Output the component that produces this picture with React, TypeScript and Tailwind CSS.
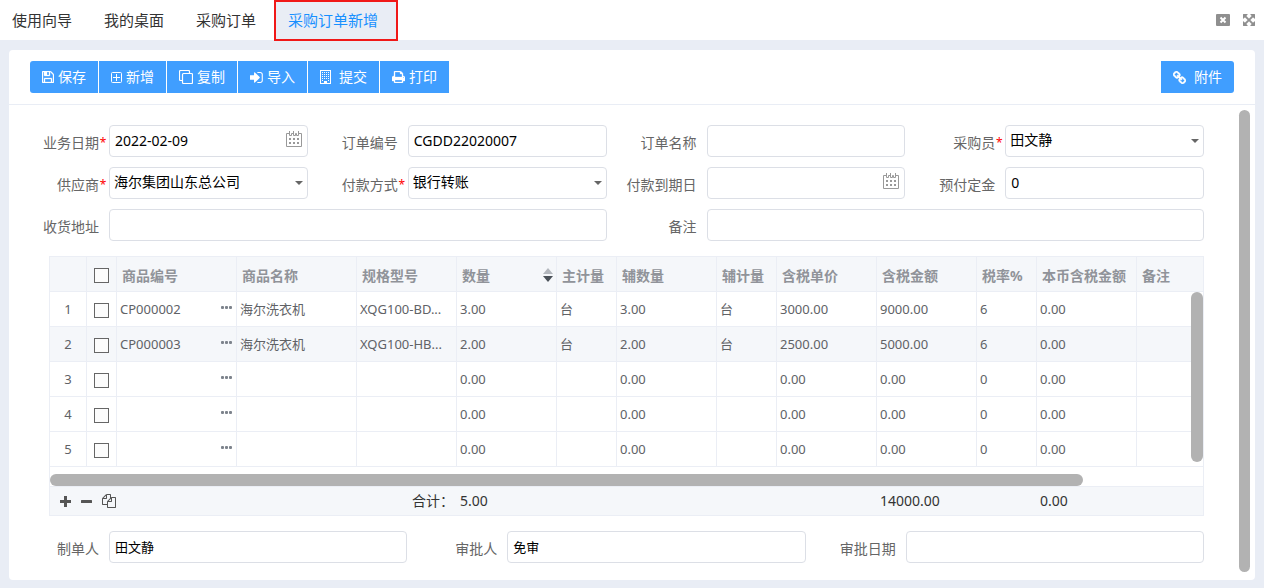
import type { ReactNode } from "react";

const tabs = ["使用向导", "我的桌面", "采购订单"];

const columns = [
  { key: "code", title: "商品编号" },
  { key: "name", title: "商品名称" },
  { key: "spec", title: "规格型号" },
  { key: "qty", title: "数量" },
  { key: "unit", title: "主计量" },
  { key: "auxQty", title: "辅数量" },
  { key: "auxUnit", title: "辅计量" },
  { key: "price", title: "含税单价" },
  { key: "amount", title: "含税金额" },
  { key: "rate", title: "税率%" },
  { key: "localAmount", title: "本币含税金额" },
  { key: "remark", title: "备注" },
] as const;

type Row = Partial<Record<(typeof columns)[number]["key"], string>>;

const blank: Row = { qty: "0.00", auxQty: "0.00", price: "0.00", amount: "0.00", rate: "0", localAmount: "0.00" };

const rows: Row[] = [
  {
    code: "CP000002", name: "海尔洗衣机", spec: "XQG100-BD...", qty: "3.00", unit: "台", auxQty: "3.00",
    auxUnit: "台", price: "3000.00", amount: "9000.00", rate: "6", localAmount: "0.00",
  },
  {
    code: "CP000003", name: "海尔洗衣机", spec: "XQG100-HB...", qty: "2.00", unit: "台", auxQty: "2.00",
    auxUnit: "台", price: "2500.00", amount: "5000.00", rate: "6", localAmount: "0.00",
  },
  blank,
  blank,
  blank,
];

/* ---------- icons ---------- */

function SaveIcon() {
  return (
    <svg viewBox="128 128 1536 1536" className="h-3 w-3 fill-current stroke-current stroke-[40]">
      <path d="M512 1536h768v-384h-768v384zm896 0h128v-896q0-14-10-38.5t-20-34.5l-281-281q-10-10-34-20t-39-10v416q0 40-28 68t-68 28h-576q-40 0-68-28t-28-68v-416h-128v1280h128v-416q0-40 28-68t68-28h832q40 0 68 28t28 68v416zm-384-928v-320q0-13-9.5-22.5t-22.5-9.5h-192q-13 0-22.5 9.5t-9.5 22.5v320q0 13 9.5 22.5t22.5 9.5h192q13 0 22.5-9.5t9.5-22.5zm640 32v928q0 40-28 68t-68 28h-1344q-40 0-68-28t-28-68v-1344q0-40 28-68t68-28h928q40 0 88 20t76 48l280 280q28 28 48 76t20 88z" />
    </svg>
  );
}

function AddIcon() {
  return (
    <svg viewBox="0 0 11 11" className="h-[11px] w-[11px] fill-none stroke-current">
      <rect x="0.5" y="0.5" width="10" height="10" rx="1" />
      <path d="M5.5 2v7M2 5.5h7" />
    </svg>
  );
}

function CopyIcon() {
  return (
    <svg viewBox="0 0 14 14" className="h-3.5 w-3.5 fill-none stroke-current stroke-[1.2]">
      <path d="M3.5 10.5h-2a1 1 0 0 1-1-1v-8a1 1 0 0 1 1-1h8a1 1 0 0 1 1 1v1.500" />
      <rect x="3.5" y="3.5" width="10" height="10" rx="1" />
    </svg>
  );
}

function ImportIcon() {
  return (
    <svg viewBox="192 256 1472 1280" className="h-[11px] w-[13px] fill-current">
      <path d="M1312 896q0 26-19 45l-544 544q-19 19-45 19t-45-19-19-45v-288h-448q-26 0-45-19t-19-45v-384q0-26 19-45t45-19h448v-288q0-26 19-45t45-19 45 19l544 544q19 19 19 45zm352-352v704q0 119-84.5 203.5t-203.5 84.5h-320q-13 0-22.5-9.5t-9.5-22.5q0-4-1-20t-.5-26.5 3-23.5 10-19.5 20.5-6.5h320q66 0 113-47t47-113v-704q0-66-47-113t-113-47h-312l-11.5-1-11.5-3-8-5.5-7-9-2-13.5q0-4-1-20t-.5-26.5 3-23.5 10-19.5 20.5-6.5h320q119 0 203.5 84.5t84.5 203.5z" />
    </svg>
  );
}

function SubmitIcon() {
  return (
    <svg viewBox="0 0 15 14" className="h-3.5 w-[15px] fill-current">
      <path fillRule="evenodd" d="M0 0h11v14H0zM1 1v12h3v-2h3v2h3V1z" />
      {[2, 4, 6, 8].map((y) => (
        <path key={y} d={`M2 ${y}h1v1h-1zM4 ${y}h1v1h-1zM6 ${y}h1v1h-1zM8 ${y}h1v1h-1z`} />
      ))}
      <path d="M2 10h1v1h-1zM8 10h1v1h-1z" />
    </svg>
  );
}

function PrintIcon() {
  return (
    <svg viewBox="64 128 1664 1536" className="h-3 w-[13px] fill-current stroke-current stroke-[40]">
      <path d="M448 1536h896v-256h-896v256zm0-640h896v-384h-160q-40 0-68-28t-28-68v-160h-640v640zm1152 64q0-26-19-45t-45-19-45 19-19 45 19 45 45 19 45-19 19-45zm128 0v416q0 13-9.5 22.5t-22.5 9.5h-224v160q0 40-28 68t-68 28h-960q-40 0-68-28t-28-68v-160h-224q-13 0-22.5-9.5t-9.5-22.5v-416q0-79 56.5-135.5t135.5-56.5h64v-544q0-40 28-68t68-28h672q40 0 88 20t76 48l152 152q28 28 48 76t20 88v256h64q79 0 135.5 56.5t56.5 135.5z" />
    </svg>
  );
}

function LinkIcon() {
  return (
    <svg viewBox="80 16 1632 1632" className="h-[13px] w-[13px] fill-current stroke-current stroke-[60]">
      <path d="M1520 1216q0-40-28-68l-208-208q-28-28-68-28-42 0-72 32 3 3 19 18.5t21.5 21.5 15 19 13 25.5 3.5 27.5q0 40-28 68t-68 28q-15 0-27.5-3.5t-25.5-13-19-15-21.5-21.5-18.5-19q-33 31-33 73 0 40 28 68l206 207q27 27 68 27 40 0 68-26l147-146q28-28 28-67zm-703-705q0-40-28-68l-206-207q-28-28-68-28-39 0-68 27l-147 146q-28 28-28 67 0 40 28 68l208 208q27 27 68 27 42 0 72-31-3-3-19-18.5t-21.5-21.5-15-19-13-25.5-3.5-27.5q0-40 28-68t68-28q15 0 27.5 3.5t25.5 13 19 15 21.5 21.5 18.5 19q33-31 33-73zm895 705q0 120-85 203l-147 146q-83 83-203 83-121 0-204-85l-206-207q-83-83-83-203 0-123 88-209l-88-88q-86 88-208 88-120 0-204-84l-208-208q-84-84-84-204t85-203l147-146q83-83 203-83 121 0 204 85l206 207q83 83 83 203 0 123-88 209l88 88q86-88 208-88 120 0 204 84l208 208q84 84 84 204z" />
    </svg>
  );
}

function CloseIcon() {
  return (
    <svg viewBox="0 0 14 12" className="h-3 w-3.5">
      <rect width="14" height="12" rx="1" className="fill-[#8f8f8f]" />
      <path d="M4.5 3.5l5 5M9.500 3.500L4.500 8.500" className="stroke-white stroke-2" />
    </svg>
  );
}

function ExpandIcon() {
  return (
    <svg viewBox="128 128 1536 1536" className="h-3 w-3 fill-[#8f8f8f] stroke-[#8f8f8f] stroke-[30]">
      <path d="M1411 541l-355 355 355 355 144-144q29-31 70-14 39 17 39 59v448q0 26-19 45t-45 19h-448q-42 0-59-40-17-39 14-69l144-144-355-355-355 355 144 144q31 30 14 69-17 40-59 40h-448q-26 0-45-19t-19-45v-448q0-42 40-59 39-17 69 14l144 144 355-355-355-355-144 144q-19 19-45 19-12 0-24-5-40-17-40-59v-448q0-26 19-45t45-19h448q42 0 59 40 17 39-14 69l-144 144 355 355 355-355-144-144q-31-30-14-69 17-40 59-40h448q26 0 45 19t19 45v448q0 42-39 59-13 5-25 5-26 0-45-19z" />
    </svg>
  );
}

function FilesIcon() {
  return (
    <svg viewBox="0 0 1792 1792" className="h-3.5 w-3.5 fill-[#555]">
      <path d="M1696 384q40 0 68 28t28 68v1216q0 40-28 68t-68 28h-960q-40 0-68-28t-28-68v-288h-544q-40 0-68-28t-28-68v-672q0-40 20-88t48-76l408-408q28-28 76-48t88-20h416q40 0 68 28t28 68v328q68-40 128-40h416zm-544 213l-299 299h299v-299zm-640-384l-299 299h299v-299zm196 647l316-316v-416h-384v416q0 40-28 68t-68 28h-416v640h512v-256q0-40 20-88t48-76zm956 804v-1152h-384v416q0 40-28 68t-68 28h-416v640h896z" />
    </svg>
  );
}

function CalendarIcon() {
  return (
    <svg viewBox="0 0 16 16" className="h-4 w-4">
      <path
        d="M3.5 2.5h-3v13h15v-13h-3M3.5 0v4.500h2v-2h2v-2.500M7.500 2v2.500h2v-2M9.500 2.500h1v2h2V0"
        className="fill-none stroke-[#999]"
      />
      <path d="M3 7h2v2H3zM7 7h2v2H7zM11 7h2v2h-2zM3 11h2v2H3zM7 11h2v2H7zM11 11h2v2h-2z" className="fill-[#999]" />
    </svg>
  );
}

/* ---------- form controls ---------- */

const controlClass = "h-8 w-full appearance-none rounded border border-[#dcdfe6] bg-white pb-0.5 text-black outline-none";

type FieldProps = {
  id: string;
  label: string;
  required?: boolean;
  wide?: boolean;
  children: ReactNode;
};

function Field({ id, label, required, wide, children }: FieldProps) {
  return (
    <div className={wide ? "col-span-2 flex" : "flex"}>
      <label htmlFor={id} className="flex w-[100px] shrink-0 justify-end pt-1 text-sm leading-7 text-[#666]">
        {label}
        <span className="w-2.5 pr-0.5 text-center text-xs leading-7 text-[#f00]">{required && "*"}</span>
      </label>
      <div className="relative min-w-0 flex-1">{children}</div>
    </div>
  );
}

function TextInput({ id, value = "", small }: { id: string; value?: string; small?: boolean }) {
  return (
    <input
      id={id}
      type="text"
      defaultValue={value}
      className={`${controlClass} pl-[5px] ${small ? "text-[13px]" : "text-sm"}`}
    />
  );
}

function DateInput({ id, value }: { id: string; value?: string }) {
  return (
    <>
      <TextInput id={id} value={value} />
      <button type="button" aria-label="选择日期" className="absolute top-1.5 right-1.5">
        <CalendarIcon />
      </button>
    </>
  );
}

function SelectInput({ id, value }: { id: string; value: string }) {
  return (
    <>
      <select id={id} defaultValue={value} className={`${controlClass} pl-1 text-sm`}>
        <option>{value}</option>
      </select>
      <svg viewBox="0 0 8 4" className="pointer-events-none absolute top-3.5 right-[5px] h-1 w-2 fill-[#666]">
        <path d="M0 0h8L4 4z" />
      </svg>
    </>
  );
}

function ToolButton({ icon, className = "gap-1", children }: { icon: ReactNode; className?: string; children: ReactNode }) {
  return (
    <button type="button" className={`flex h-8 items-center bg-[#409eff] px-3 text-sm text-white ${className}`}>
      {icon}
      {children}
    </button>
  );
}

/* ---------- order lines ---------- */

// Shared by the line table and the totals table so that both line up.
function Columns() {
  return (
    <colgroup>
      <col className="w-[37px]" />
      <col className="w-[30px]" />
      <col className="w-[120px]" />
      <col className="w-[120px]" />
      <col className="w-[100px]" />
      <col className="w-[100px]" />
      <col className="w-[60px]" />
      <col className="w-[100px]" />
      <col className="w-[60px]" />
      <col className="w-[100px]" />
      <col className="w-[100px]" />
      <col className="w-[60px]" />
      <col className="w-[100px]" />
      <col />
    </colgroup>
  );
}

function Check({ label }: { label: string }) {
  return (
    <input
      type="checkbox"
      aria-label={label}
      className="mx-auto mt-0.5 block h-[15px] w-[15px] appearance-none border border-[#666] bg-[#fcfcfc]"
    />
  );
}

function OrderLines() {
  return (
    <div className="mt-[15px] ml-10 border border-[#ebeef5]">
      <div className="relative">
        <table className="w-full table-fixed border-separate border-spacing-0">
          <Columns />
          <thead>
            <tr className="h-[35px] bg-[#f5f7fa] text-left text-sm text-[#909399] [&>th]:border-r [&>th]:border-b [&>th]:border-[#ebeef5] [&>th:last-child]:border-r-0">
              <th></th>
              <th>
                <Check label="全选" />
              </th>
              {columns.map((col) => (
                <th key={col.key} className="pt-1 pl-[5px] font-bold whitespace-nowrap">
                  {col.key === "qty" ? (
                    <button type="button" className="flex w-full items-center justify-between pr-[3px]">
                      {col.title}
                      <svg viewBox="0 0 10 14" className="mb-0.5 h-3.5 w-2.5">
                        <path d="M5 0l5 6H0z" className="fill-[#b3b7bd]" />
                        <path d="M0 8h10l-5 6z" className="fill-[#4a5158]" />
                      </svg>
                    </button>
                  ) : (
                    col.title
                  )}
                </th>
              ))}
            </tr>
          </thead>
          <tbody>
            {rows.map((row, i) => (
              <tr
                key={i}
                className={`h-[35px] text-[13px] text-[#606266] [&>td]:border-r [&>td]:border-b [&>td]:border-[#ebeef5] [&>td:last-child]:border-r-0 ${i === 1 ? "bg-[#f5f7fa]" : "bg-white"}`}
              >
                <td className="pt-0.5 text-center">{i + 1}</td>
                <td>
                  <Check label={`选择第${i + 1}行`} />
                </td>
                {columns.map((col) => (
                  <td key={col.key} className="pt-0.5 pl-[3px] whitespace-nowrap">
                    {col.key === "code" ? (
                      <div className="flex items-center justify-between pr-1">
                        <span>{row.code}</span>
                        <button type="button" aria-label="选择商品" className="pb-1.5">
                          <svg viewBox="0 0 11 3" className="h-[3px] w-[11px] fill-[#7d838c]">
                            <rect width="3" height="3" rx="1" />
                            <rect x="4" width="3" height="3" rx="1" />
                            <rect x="8" width="3" height="3" rx="1" />
                          </svg>
                        </button>
                      </div>
                    ) : (
                      row[col.key]
                    )}
                  </td>
                ))}
              </tr>
            ))}
          </tbody>
        </table>
        <div className="absolute top-[35px] right-0 bottom-[5px] w-3 rounded-full bg-[#b2b2b2]" />
      </div>

      <div className="pt-[7px]">
        <div className="h-3 w-[89.6%] rounded-full bg-[#b2b2b2]" />
      </div>

      <table className="w-full table-fixed border-separate border-spacing-0 border-t border-[#ebeef5] bg-[#f5f7fa] text-sm text-[#333]">
        <Columns />
        <tbody>
          <tr className="h-7 [&>td]:pl-[3px]">
            <td colSpan={4}>
              <div className="flex items-center gap-2.5 pl-[7px]">
                <button type="button" aria-label="增行">
                  <svg viewBox="0 0 11 11" className="h-[11px] w-[11px] fill-[#555]">
                    <path d="M4 0h3v4h4v3H7v4H4V7H0V4h4z" />
                  </svg>
                </button>
                <button type="button" aria-label="删行">
                  <svg viewBox="0 0 11 11" className="h-[11px] w-[11px] fill-[#555]">
                    <rect y="4" width="11" height="3" rx="0.5" />
                  </svg>
                </button>
                <button type="button" aria-label="复制行">
                  <FilesIcon />
                </button>
              </div>
            </td>
            <td className="pr-[3px] text-right">合计：</td>
            <td>5.00</td>
            <td colSpan={4}></td>
            <td>14000.00</td>
            <td></td>
            <td>0.00</td>
            <td></td>
          </tr>
        </tbody>
      </table>
    </div>
  );
}

export default function App() {
  return (
    <div className="min-h-screen bg-[#e9edf5] pb-2 font-['Noto_Sans','Noto_Sans_CJK_SC',sans-serif]">
      <header className="flex h-10 items-center justify-between bg-white pr-[9px]">
        <nav className="flex items-center text-[15px] text-[#333]">
          <div className="flex gap-8 pr-[18px] pl-3">
            {tabs.map((tab) => (
              <a key={tab} href="#">
                {tab}
              </a>
            ))}
          </div>
          <a
            href="#"
            aria-current="page"
            className="z-10 -mb-px flex h-[41px] items-center border-2 border-[#f01818] bg-[#e9edf5] pr-[18px] pb-px pl-3 text-[#1890ff]"
          >
            采购订单新增
          </a>
        </nav>
        <div className="flex items-center gap-[13px]">
          <button type="button" aria-label="关闭">
            <CloseIcon />
          </button>
          <button type="button" aria-label="全屏">
            <ExpandIcon />
          </button>
        </div>
      </header>

      <main className="mx-[9px] mt-2.5 rounded bg-white">
        <div className="flex justify-between border-b border-[#e9edf5] px-[21px] py-[11px]">
          <div className="flex gap-px">
            <ToolButton icon={<SaveIcon />} className="gap-1 rounded-l-[3px]">保存</ToolButton>
            <ToolButton icon={<AddIcon />}>新增</ToolButton>
            <ToolButton icon={<CopyIcon />}>复制</ToolButton>
            <ToolButton icon={<ImportIcon />}>导入</ToolButton>
            <ToolButton icon={<SubmitIcon />}>提交</ToolButton>
            <ToolButton icon={<PrintIcon />}>打印</ToolButton>
          </div>
          <ToolButton icon={<LinkIcon />} className="gap-2 rounded-r-[3px]">附件</ToolButton>
        </div>

        <div className="flex">
          <form className="min-w-0 flex-1 pt-5 pb-[17px]">
            <div className="grid grid-cols-4 gap-y-2.5">
              <Field id="date" label="业务日期" required><DateInput id="date" value="2022-02-09" /></Field>
              <Field id="orderNo" label="订单编号"><TextInput id="orderNo" value="CGDD22020007" /></Field>
              <Field id="orderName" label="订单名称"><TextInput id="orderName" /></Field>
              <Field id="buyer" label="采购员" required><SelectInput id="buyer" value="田文静" /></Field>
              <Field id="supplier" label="供应商" required><SelectInput id="supplier" value="海尔集团山东总公司" /></Field>
              <Field id="payType" label="付款方式" required><SelectInput id="payType" value="银行转账" /></Field>
              <Field id="dueDate" label="付款到期日"><DateInput id="dueDate" /></Field>
              <Field id="deposit" label="预付定金"><TextInput id="deposit" value="0" /></Field>
              <Field id="address" label="收货地址" wide><TextInput id="address" /></Field>
              <Field id="remark" label="备注" wide><TextInput id="remark" /></Field>
            </div>

            <OrderLines />

            <div className="mt-[15px] grid grid-cols-3">
              <Field id="creator" label="制单人"><TextInput id="creator" value="田文静" small /></Field>
              <Field id="auditor" label="审批人"><TextInput id="auditor" value="免审" small /></Field>
              <Field id="auditDate" label="审批日期"><TextInput id="auditDate" /></Field>
            </div>
          </form>
          <div className="flex w-[51px] shrink-0 justify-end pt-[5px] pr-[5px] pb-2">
            <div className="w-[11px] rounded-full bg-[#b2b2b2]" />
          </div>
        </div>
      </main>
    </div>
  );
}
